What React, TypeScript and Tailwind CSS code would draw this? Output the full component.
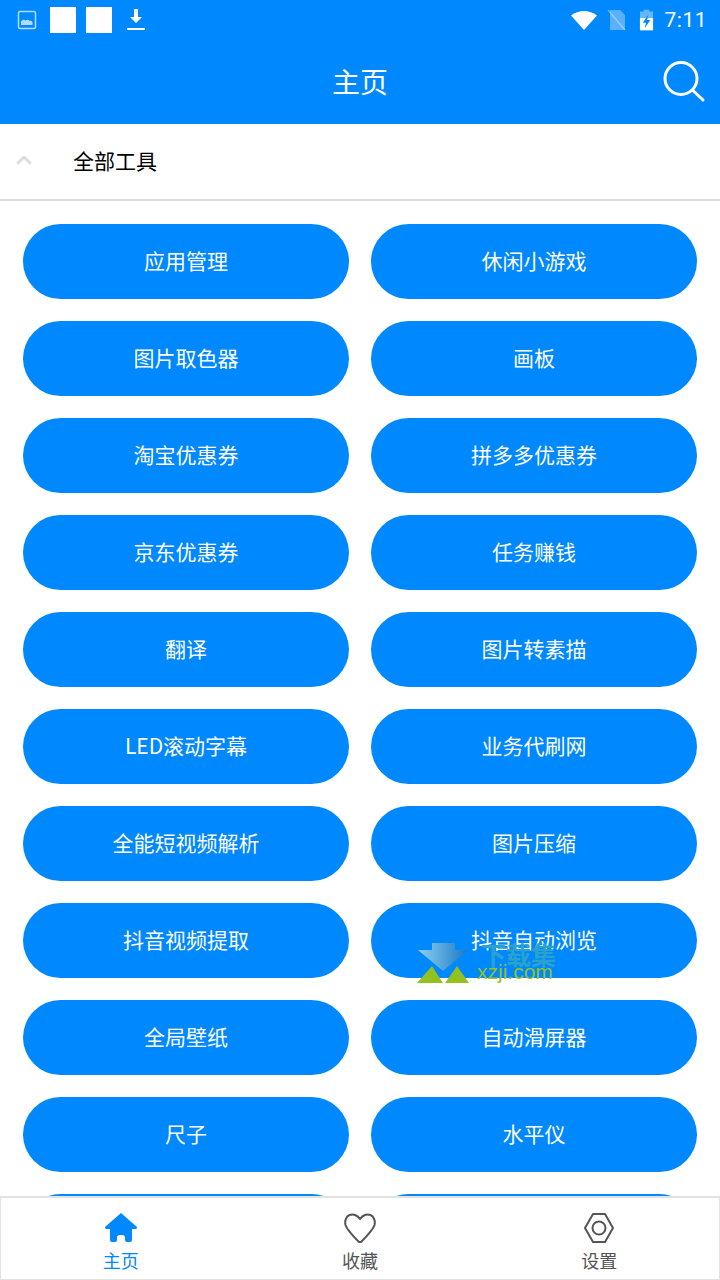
import { ChevronUp } from 'lucide-react'

const TOOLS = [
  '应用管理', '休闲小游戏',
  '图片取色器', '画板',
  '淘宝优惠券', '拼多多优惠券',
  '京东优惠券', '任务赚钱',
  '翻译', '图片转素描',
  'LED滚动字幕', '业务代刷网',
  '全能短视频解析', '图片压缩',
  '抖音视频提取', '抖音自动浏览',
  '全局壁纸', '自动滑屏器',
  '尺子', '水平仪',
  '', '',
]

const StatusBar = () => (
  <div className="h-10 flex items-center pl-[17px] pr-[13px] text-white">
    <svg width="20" height="20" viewBox="0 0 20 20" className="mr-[13px] opacity-70">
      <rect x="1.5" y="1.5" width="17" height="17" rx="1.5" fill="none" stroke="white" strokeWidth="1.5" />
      <path d="M4 15v-3.500c1.500-2 3-2.500 4.500-1 1.500-1 3-1 4 .5 1-.5 2-.3 3 1V15z" fill="white" />
    </svg>
    <div className="w-[26px] h-[26px] bg-white mr-[10px]" />
    <div className="w-[26px] h-[26px] bg-white mr-[14px]" />
    <svg width="20" height="24" viewBox="0 0 20 24">
      <path d="M8 1h4v8h4l-6 6-6-6h4z" fill="white" />
      <rect x="1" y="20" width="18" height="2" fill="white" />
    </svg>
    <div className="flex-1" />
    <svg width="26" height="22" viewBox="0 0 26 22" className="mr-[10px]">
      <path d="M0 6.500C7.500 .5 18.500 .5 26 6.500L13 21z" fill="white" />
    </svg>
    <svg width="19" height="22" viewBox="0 0 19 22" className="mr-[13px]">
      <path d="M3 1h10l5 5v15H3z" fill="white" opacity="0.35" />
      <path d="M1 1l17 20" stroke="white" strokeWidth="1.500" opacity="0.35" />
    </svg>
    <svg width="15" height="24" viewBox="0 0 16 24" className="mr-[11px]">
      <path d="M5 1h6v2h4v20H1V3h4z" fill="white" opacity="0.4" />
      <path d="M1 10h14v13H1z" fill="white" />
      <path d="M10 6l-6 9h3.500L6 21l6-9H8.500z" fill="#0088ff" />
    </svg>
    <span className="text-[21px] leading-none tracking-[0.5px] [font-family:Roboto,sans-serif]">7:11</span>
  </div>
)

const HomeIcon = () => (
  <svg width="32" height="30" viewBox="0 0 32 30">
    <path d="M16 0L32 14l-.5 2H27v11a2 2 0 0 1-2 2h-3a2 2 0 0 1-2-2v-3a3 3 0 0 0-2-2h-4a3 3 0 0 0-2 2v3a2 2 0 0 1-2 2H7a2 2 0 0 1-2-2V16H.5L0 14z" fill="#0088ff" />
  </svg>
)

const HeartIcon = () => (
  <svg width="32" height="30" viewBox="0 0 32 30" fill="none" stroke="#555" strokeWidth="2" strokeLinejoin="round">
    <path d="M16 6C13.500 2 9 .5 5.500 2 2 3.500 .5 8 1.500 12c1.500 5 9 12.500 13 16.500a2 2 0 0 0 3 0C21.500 24.500 29 17 30.500 12c1-4-.5-8.500-4-10C23 .5 18.500 2 16 6z" />
  </svg>
)

const GearIcon = () => (
  <svg width="32" height="30" viewBox="0 0 32 30" fill="none" stroke="#555" strokeWidth="2" strokeLinejoin="round">
    <path d="M10 1h12l8 14-8 14H10L2 15z" />
    <circle cx="16" cy="15" r="6.500" />
  </svg>
)

const TABS = [
  { label: '主页', icon: HomeIcon, color: 'text-[#0088ff]' },
  { label: '收藏', icon: HeartIcon, color: 'text-[#555555]' },
  { label: '设置', icon: GearIcon, color: 'text-[#555555]' },
]

export default function App() {
  return (
    <div className="relative w-[720px] h-[1280px] overflow-hidden flex flex-col bg-white [font-family:'Noto_Sans_CJK_SC','Noto_Sans',sans-serif]">
      {/* header */}
      <div className="bg-[#0088ff] shrink-0">
        <StatusBar />
        <div className="relative h-[84px] flex items-center justify-center">
          <span className="text-white text-[28px] leading-none -mt-[2px]">主页</span>
          <svg width="44" height="44" viewBox="0 0 44 44" fill="none" stroke="white" strokeWidth="3" strokeLinecap="round" className="absolute right-[14px] top-[19px]">
            <circle cx="19" cy="19.500" r="16" />
            <path d="M31 31.500L41 41" />
          </svg>
        </div>
      </div>

      <div className="shrink-0 h-[77px] border-b-2 border-[#dedede] flex items-center pl-[12px]">
        <ChevronUp size={24} color="#dddddd" strokeWidth={3} className="-mt-[4px]" />
        <span className="ml-[37px] text-[21px] leading-none text-black -mt-[3px]">全部工具</span>
      </div>

      {/* tools */}
      <div className="flex-1 overflow-hidden px-[23px] pt-[23px] grid grid-cols-2 gap-x-[22px] gap-y-[22px] auto-rows-[75px] content-start">
        {TOOLS.map((t, i) => (
          <button key={i} className="rounded-[37.5px] bg-[#0088ff] text-white text-[21px] leading-none pb-[2px] flex items-center justify-center">
            {t}
          </button>
        ))}
      </div>

      {/* bottom tabs */}
      <div className="shrink-0 h-[84px] bg-white border-t-2 border-[#e2e2e2] border-x border-b flex">
        {TABS.map(({ label, icon: Icon, color }) => (
          <div key={label} className={`flex-1 flex flex-col items-center pt-[15px] ${color}`}>
            <Icon />
            <span className="text-[18px] leading-none mt-[8px]">{label}</span>
          </div>
        ))}
      </div>

      {/* watermark */}
      <div className="absolute left-[417px] top-[941px] w-[150px] h-[46px]">
        <svg width="54" height="44" viewBox="0 0 54 44" className="absolute left-0 top-0">
          <defs>
            <linearGradient id="wm" x1="0" y1="0" x2="1" y2="0">
              <stop offset="0" stopColor="#8fd0ee" />
              <stop offset="1" stopColor="#1878c8" />
            </linearGradient>
          </defs>
          <path d="M1 9h14V2h23v7h13L26 30z" fill="url(#wm)" />
          <path d="M0 42L15 25 26 42z" fill="#94c11f" />
          <path d="M28 42L40 25 52 42z" fill="#94c11f" />
        </svg>
        <span className="absolute left-[64px] top-[1px] text-[25px] leading-none font-bold text-[#29a3cc] whitespace-nowrap">下载集</span>
        <span className="absolute left-[60px] top-[19px] text-[21px] leading-[24px] text-[#94c11f] whitespace-nowrap [font-family:'Liberation_Sans',sans-serif]">xzji.com</span>
      </div>
    </div>
  )
}
